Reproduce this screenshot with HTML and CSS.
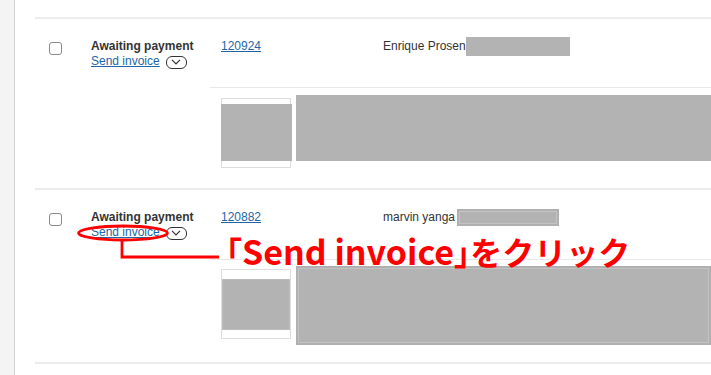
FILE: index.html
```html
<!DOCTYPE html>
<html lang="ja">
<head>
<meta charset="utf-8">
<title>Orders</title>
<link rel="stylesheet" href="styles.css">
</head>
<body>
<div class="page">
  <aside class="sidebar"></aside>
  <main class="list">
    <section class="order">
      <div class="order-head">
        <div class="cell-check"><input type="checkbox" class="check"></div>
        <div class="cell-status">
          <div class="status">Awaiting payment</div>
          <div class="actions">
            <a href="#" class="link">Send invoice</a>
            <span class="toggle"><svg width="10" height="6" viewBox="0 0 10 6"><path d="M1 0.8 L5 5 L9 0.8" fill="none" stroke="#333" stroke-width="1.2"/></svg></span>
          </div>
        </div>
        <div class="cell-order"><a href="#" class="link">120924</a></div>
        <div class="cell-name"><span class="name">Enrique Prosen</span><span class="redact redact-1"></span></div>
      </div>
      <div class="order-detail detail-1">
        <div class="thumb"><div class="thumb-img img-1"></div></div>
        <div class="block block-1"></div>
      </div>
    </section>
    <section class="order">
      <div class="order-head head-2">
        <div class="cell-check"><input type="checkbox" class="check"></div>
        <div class="cell-status">
          <div class="status">Awaiting payment</div>
          <div class="actions">
            <a href="#" class="link">Send invoice</a>
            <span class="toggle"><svg width="10" height="6" viewBox="0 0 10 6"><path d="M1 0.8 L5 5 L9 0.8" fill="none" stroke="#333" stroke-width="1.2"/></svg></span>
          </div>
        </div>
        <div class="cell-order"><a href="#" class="link">120882</a></div>
        <div class="cell-name"><span class="name">marvin yanga</span><span class="redact redact-2"></span></div>
      </div>
      <div class="order-detail detail-2">
        <div class="thumb"><div class="thumb-img img-2"></div></div>
        <div class="block block-2"></div>
      </div>
    </section>
    <div class="list-end"></div>
  </main>
  <div class="annotation">
    <svg class="marks" width="711" height="375" viewBox="0 0 711 375">
      <ellipse cx="123" cy="233" rx="44.5" ry="7" fill="none" stroke="#ff0000" stroke-width="2.8"/>
      <path d="M122 240 V257 H219" fill="none" stroke="#ff0000" stroke-width="2.8"/>
    </svg>
    <div class="callout">「<span class="lat">Send invoice</span><span class="close">」</span>をクリック</div>
  </div>
</div>
</body>
</html>
```

FILE: styles.css
```css
* { box-sizing: border-box; }

html, body {
  margin: 0;
  padding: 0;
  background: #ffffff;
}

body {
  font-family: "Liberation Sans", Arial, sans-serif;
  font-size: 12px;
  color: #3a3a3a;
}

.page {
  position: relative;
  display: flex;
  width: 711px;
  height: 375px;
  overflow: hidden;
}

.sidebar {
  width: 15px;
  flex: none;
  background: #f4f4f4;
  border-right: 1px solid #d2d2d2;
}

.list {
  flex: 1;
  padding-top: 17px;
  padding-left: 20px;
}

.order {
  border-top: 2px solid #ececec;
}

.order-head {
  display: grid;
  grid-template-columns: 56px 130px 162px 1fr;
  height: 68px;
  padding-top: 20px;
  line-height: 15px;
}

.head-2 { height: 69px; }

.cell-check {
  padding-left: 14px;
  padding-top: 3px;
}

.check {
  appearance: none;
  -webkit-appearance: none;
  display: block;
  margin: 0;
  width: 13px;
  height: 13px;
  border: 1px solid #8a8a8a;
  border-radius: 3px;
  background: #fff;
}

.status {
  font-weight: 700;
  color: #333;
}

.actions {
  display: flex;
  align-items: center;
  gap: 6px;
}

.link {
  color: #2366a8;
  text-decoration: underline;
}

.toggle {
  display: inline-flex;
  align-items: center;
  justify-content: center;
  width: 21px;
  height: 13px;
  border: 1px solid #333;
  border-radius: 6px;
  margin-top: 1px;
}

.cell-name {
  display: flex;
  align-items: flex-start;
  color: #333;
}

.redact {
  display: block;
  background: #b3b3b3;
}

.redact-1 {
  width: 104px;
  height: 19px;
  margin-top: -2px;
}

.redact-2 {
  width: 102px;
  height: 17px;
  margin-top: -1px;
  margin-left: 2px;
  box-shadow: inset 0 0 0 2px #b0b0b0, inset 0 0 0 3px #c4c4c4;
}

.order-detail {
  display: flex;
  align-items: flex-start;
  gap: 5px;
  margin-left: 175px;
  padding-left: 11px;
  border-top: 1px solid #e8e8e8;
}

.detail-1 { padding-top: 7px; padding-bottom: 20px; }
.detail-2 { padding-top: 6px; padding-bottom: 17px; }

.thumb {
  flex: none;
  width: 70px;
  height: 70px;
  margin-top: 3px;
  border: 1px solid #dcdcdc;
  background: #fff;
}

.thumb-img { background: #b3b3b3; }

.img-1 {
  width: 71px;
  height: 57px;
  margin-top: 5px;
  margin-left: -1px;
}

.img-2 {
  width: 68px;
  height: 51px;
  margin-top: 9px;
  box-shadow: inset 0 0 0 1px #bcbcbc;
}

.block {
  flex: 1;
  background: #b3b3b3;
}

.block-1 { height: 66px; }

.block-2 {
  height: 79px;
  box-shadow: inset 0 0 0 2px #b0b0b0, inset 0 0 0 3px #c2c2c2;
}

.list-end {
  border-top: 2px solid #ececec;
}

.annotation {
  position: absolute;
  left: 0;
  top: 0;
  width: 711px;
  height: 375px;
  pointer-events: none;
}

.marks {
  position: absolute;
  left: 0;
  top: 0;
}

.callout {
  position: absolute;
  left: 210px;
  top: 235px;
  font-family: "Noto Sans CJK JP", sans-serif;
  font-weight: 700;
  font-size: 32px;
  line-height: 32px;
  color: #ff0000;
  white-space: nowrap;
}

.lat {
  font-size: 34px;
}

.close {
  font-feature-settings: "halt";
}
```
